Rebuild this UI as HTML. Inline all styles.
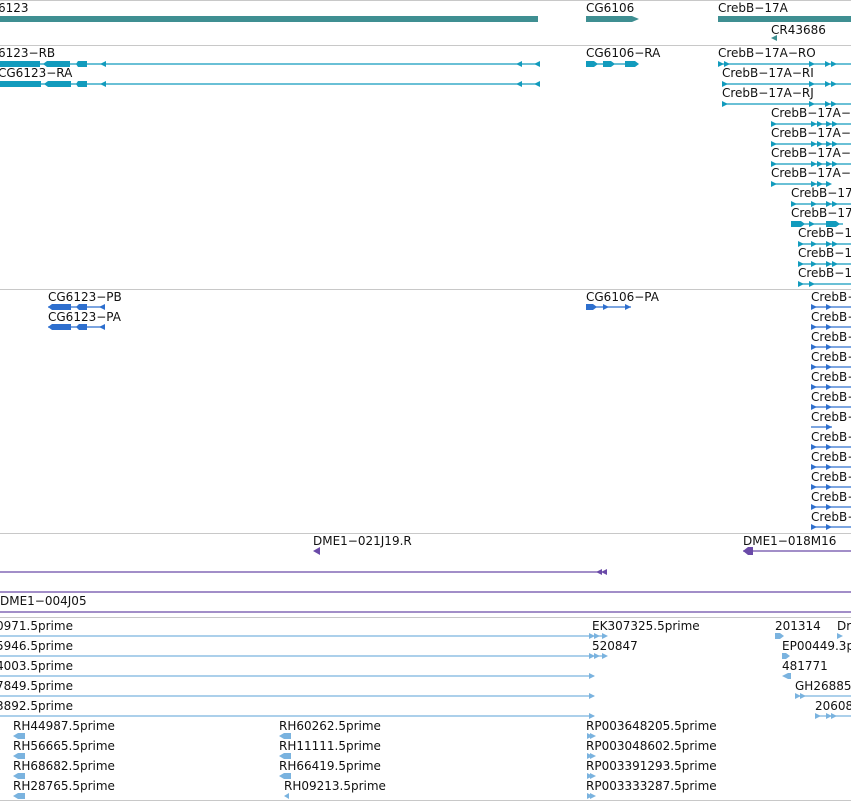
<!DOCTYPE html>
<html><head><meta charset="utf-8"><style>
html,body{margin:0;padding:0;background:#fff;width:851px;height:801px;overflow:hidden}
svg{display:block}
text{font-family:"DejaVu Sans","Liberation Sans",sans-serif;font-size:12px;fill:#111}
</style></head><body>
<svg width="851" height="801" viewBox="0 0 851 801">
<defs>
<path id="r" d="M0,-3L6,0L0,3Z"/>
<path id="l" d="M6,-3L0,0L6,3Z"/>
</defs>
<g stroke="#c8c8c8" stroke-width="1">
<line x1="0" y1="0.5" x2="851" y2="0.5"/><line x1="0" y1="45.5" x2="851" y2="45.5"/>
<line x1="0" y1="289.5" x2="851" y2="289.5"/><line x1="0" y1="533.5" x2="851" y2="533.5"/>
<line x1="0" y1="617.5" x2="851" y2="617.5"/><line x1="0" y1="800.5" x2="851" y2="800.5"/>
</g>
<!-- genes -->
<g fill="#3f8f92">
<rect x="0" y="16" width="538" height="6"/><rect x="586" y="16" width="46" height="6"/><path d="M632,16L639,19L632,22Z"/>
<rect x="718" y="16" width="133" height="6"/><path d="M771,38L777,35L777,41Z"/>
</g>
<text x="-2" y="12">6123</text><text x="586" y="12">CG6106</text><text x="718" y="12">CrebB−17A</text><text x="771" y="34">CR43686</text>
<!-- transcripts -->
<g fill="#129bbd" stroke="#129bbd">
<g stroke-width="1.2">
<line x1="0" y1="64" x2="540" y2="64"/><line x1="0" y1="84" x2="540" y2="84"/>
<line x1="586" y1="64" x2="637" y2="64"/>
<line x1="718" y1="64" x2="851" y2="64"/><line x1="722" y1="84" x2="851" y2="84"/><line x1="722" y1="104" x2="851" y2="104"/>
<line x1="771" y1="124" x2="851" y2="124"/><line x1="771" y1="144" x2="851" y2="144"/><line x1="771" y1="164" x2="851" y2="164"/><line x1="771" y1="184" x2="830" y2="184"/>
<line x1="791" y1="204" x2="851" y2="204"/><line x1="791" y1="224" x2="843" y2="224"/>
<line x1="798" y1="244" x2="851" y2="244"/><line x1="798" y1="264" x2="851" y2="264"/><line x1="798" y1="284" x2="851" y2="284"/>
</g>
<g stroke="none">
<rect x="0" y="61" width="40" height="6"/><path d="M47,61h23v6h-23l-4,-3Z"/><path d="M78,61h9v6h-9l-2,-3Z"/>
<rect x="0" y="81" width="41" height="6"/><path d="M48,81h23v6h-23l-4,-3Z"/><path d="M78,81h9v6h-9l-2,-3Z"/>
<use href="#l" x="100" y="64"/><use href="#l" x="516" y="64"/><use href="#l" x="534" y="64"/>
<use href="#l" x="100" y="84"/><use href="#l" x="516" y="84"/><use href="#l" x="534" y="84"/>
<path d="M586,61h8l4,3l-4,3h-8Z"/><path d="M603,61h8l4,3l-4,3h-8Z"/><path d="M625,61h10l4,3l-4,3h-10Z"/>
<use href="#r" x="718" y="64"/><use href="#r" x="724" y="64"/><use href="#r" x="809" y="64"/><use href="#r" x="825" y="64"/><use href="#r" x="831" y="64"/>
<use href="#r" x="722" y="84"/><use href="#r" x="809" y="84"/><use href="#r" x="825" y="84"/><use href="#r" x="831" y="84"/>
<use href="#r" x="722" y="104"/><use href="#r" x="809" y="104"/><use href="#r" x="825" y="104"/><use href="#r" x="831" y="104"/>
<use href="#r" x="771" y="124"/><use href="#r" x="811" y="124"/><use href="#r" x="817" y="124"/><use href="#r" x="826" y="124"/><use href="#r" x="832" y="124"/>
<use href="#r" x="771" y="144"/><use href="#r" x="811" y="144"/><use href="#r" x="817" y="144"/><use href="#r" x="826" y="144"/><use href="#r" x="832" y="144"/>
<use href="#r" x="771" y="164"/><use href="#r" x="811" y="164"/><use href="#r" x="817" y="164"/><use href="#r" x="826" y="164"/><use href="#r" x="832" y="164"/>
<use href="#r" x="771" y="184"/><use href="#r" x="811" y="184"/><use href="#r" x="817" y="184"/><use href="#r" x="826" y="184"/>
<use href="#r" x="791" y="204"/><use href="#r" x="811" y="204"/><use href="#r" x="826" y="204"/><use href="#r" x="832" y="204"/>
<path d="M791,221h10l4,3l-4,3h-10Z"/><use href="#r" x="809" y="224"/><path d="M826,221h10l4,3l-4,3h-10Z"/>
<use href="#r" x="798" y="244"/><use href="#r" x="811" y="244"/><use href="#r" x="826" y="244"/><use href="#r" x="832" y="244"/>
<use href="#r" x="798" y="264"/><use href="#r" x="811" y="264"/><use href="#r" x="826" y="264"/><use href="#r" x="832" y="264"/>
<use href="#r" x="798" y="284"/><use href="#r" x="809" y="284"/>
</g></g>
<text x="-2" y="57">6123−RB</text><text x="-2" y="77">CG6123−RA</text><text x="586" y="57">CG6106−RA</text>
<text x="718" y="57">CrebB−17A−RO</text><text x="722" y="77">CrebB−17A−RI</text><text x="722" y="97">CrebB−17A−RJ</text>
<text x="771" y="117">CrebB−17A−R</text><text x="771" y="137">CrebB−17A−R</text><text x="771" y="157">CrebB−17A−R</text><text x="771" y="177">CrebB−17A−R</text>
<text x="791" y="197">CrebB−17A</text><text x="791" y="217">CrebB−17A</text>
<text x="798" y="237">CrebB−17</text><text x="798" y="257">CrebB−17</text><text x="798" y="277">CrebB−17</text>
<!-- proteins -->
<g fill="#2e6fce" stroke="#2e6fce" stroke-width="1.2">
<line x1="48" y1="307" x2="105" y2="307"/><line x1="48" y1="327" x2="105" y2="327"/><line x1="586" y1="307" x2="631" y2="307"/>
<g stroke="none">
<path d="M52,304h19v6h-19l-4,-3Z"/><path d="M79,304h8v6h-8l-3,-3Z"/><use href="#l" x="99" y="307"/>
<path d="M52,324h19v6h-19l-4,-3Z"/><path d="M79,324h8v6h-8l-3,-3Z"/><use href="#l" x="99" y="327"/>
<path d="M586,304h7l4,3l-4,3h-7Z"/><use href="#r" x="603" y="307"/><use href="#r" x="625" y="307"/>
</g>
<g stroke-width="1.2">
<line x1="811" y1="307" x2="851" y2="307"/><line x1="811" y1="327" x2="851" y2="327"/><line x1="811" y1="347" x2="851" y2="347"/><line x1="811" y1="367" x2="851" y2="367"/><line x1="811" y1="387" x2="851" y2="387"/><line x1="811" y1="407" x2="851" y2="407"/><line x1="811" y1="427" x2="832" y2="427"/><line x1="811" y1="447" x2="851" y2="447"/><line x1="811" y1="467" x2="851" y2="467"/><line x1="811" y1="487" x2="851" y2="487"/><line x1="811" y1="507" x2="851" y2="507"/><line x1="811" y1="527" x2="851" y2="527"/>
</g>
<g stroke="none">
<use href="#r" x="811" y="307"/><use href="#r" x="826" y="307"/><use href="#r" x="811" y="327"/><use href="#r" x="826" y="327"/><use href="#r" x="811" y="347"/><use href="#r" x="826" y="347"/><use href="#r" x="811" y="367"/><use href="#r" x="826" y="367"/><use href="#r" x="811" y="387"/><use href="#r" x="826" y="387"/><use href="#r" x="811" y="407"/><use href="#r" x="826" y="407"/><use href="#r" x="826" y="427"/><use href="#r" x="811" y="447"/><use href="#r" x="826" y="447"/><use href="#r" x="811" y="467"/><use href="#r" x="826" y="467"/><use href="#r" x="811" y="487"/><use href="#r" x="826" y="487"/><use href="#r" x="811" y="507"/><use href="#r" x="826" y="507"/><use href="#r" x="811" y="527"/><use href="#r" x="826" y="527"/>
</g></g>
<text x="48" y="301">CG6123−PB</text><text x="48" y="321">CG6123−PA</text><text x="586" y="301">CG6106−PA</text>
<text x="811" y="301">CrebB−</text><text x="811" y="321">CrebB−</text><text x="811" y="341">CrebB−</text><text x="811" y="361">CrebB−</text><text x="811" y="381">CrebB−</text><text x="811" y="401">CrebB−</text><text x="811" y="421">CrebB−</text><text x="811" y="441">CrebB−</text><text x="811" y="461">CrebB−</text><text x="811" y="481">CrebB−</text><text x="811" y="501">CrebB−</text><text x="811" y="521">CrebB−</text>
<!-- clones -->
<g fill="#6a4aa8" stroke="#6a4aa8" stroke-width="1.2">
<line x1="743" y1="551" x2="851" y2="551"/><line x1="0" y1="572" x2="600" y2="572"/><line x1="0" y1="592" x2="851" y2="592"/><line x1="0" y1="612" x2="851" y2="612"/>
<g stroke="none"><path d="M313,551l7,-4v8Z"/><path d="M743,551l5,-4h5v8h-5Z"/><use href="#l" x="596" y="572"/><use href="#l" x="601" y="572"/></g>
</g>
<text x="313" y="545">DME1−021J19.R</text><text x="743" y="545">DME1−018M16</text><text x="0" y="605">DME1−004J05</text>
<!-- ESTs -->
<g fill="#7ab3df" stroke="#7ab3df" stroke-width="1.2">
<line x1="0" y1="636" x2="606" y2="636"/><line x1="0" y1="656" x2="606" y2="656"/><line x1="0" y1="676" x2="594" y2="676"/><line x1="0" y1="696" x2="594" y2="696"/><line x1="0" y1="716" x2="594" y2="716"/>
<line x1="795" y1="696" x2="851" y2="696"/><line x1="815" y1="716" x2="851" y2="716"/>
<g stroke="none">
<use href="#r" x="589" y="636"/><use href="#r" x="594" y="636"/><use href="#r" x="602" y="636"/>
<use href="#r" x="589" y="656"/><use href="#r" x="594" y="656"/><use href="#r" x="602" y="656"/>
<use href="#r" x="589" y="676"/><use href="#r" x="589" y="696"/><use href="#r" x="589" y="716"/>
<path d="M775,633h5l4,3l-4,3h-5Z"/><use href="#r" x="837" y="636"/><path d="M782,653h4l4,3l-4,3h-4Z"/><path d="M782,676l6,-3h3v6h-3Z"/>
<use href="#r" x="795" y="696"/><use href="#r" x="800" y="696"/><use href="#r" x="815" y="716"/><use href="#r" x="826" y="716"/><use href="#r" x="831" y="716"/>
<path d="M13,736l5,-3h7v6h-7Z"/><path d="M13,756l5,-3h7v6h-7Z"/><path d="M13,776l5,-3h7v6h-7Z"/><path d="M13,796l5,-3h7v6h-7Z"/>
<path d="M279,736l5,-3h7v6h-7Z"/><path d="M279,756l5,-3h7v6h-7Z"/><path d="M279,776l5,-3h7v6h-7Z"/><path d="M284,796l5,-3v6Z"/>
<use href="#r" x="587" y="736"/><use href="#r" x="590" y="736"/><use href="#r" x="587" y="756"/><use href="#r" x="590" y="756"/><use href="#r" x="587" y="776"/><use href="#r" x="590" y="776"/><use href="#r" x="587" y="796"/><use href="#r" x="590" y="796"/>
</g></g>
<text x="-4" y="630">0971.5prime</text><text x="-4" y="650">5946.5prime</text><text x="-4" y="670">4003.5prime</text><text x="-4" y="690">7849.5prime</text><text x="-4" y="710">3892.5prime</text>
<text x="592" y="630">EK307325.5prime</text><text x="592" y="650">520847</text>
<text x="775" y="630">201314</text><text x="837" y="630">Dr</text><text x="782" y="650">EP00449.3p</text><text x="782" y="670">481771</text><text x="795" y="690">GH26885</text><text x="815" y="710">20608</text>
<text x="13" y="730">RH44987.5prime</text><text x="13" y="750">RH56665.5prime</text><text x="13" y="770">RH68682.5prime</text><text x="13" y="790">RH28765.5prime</text>
<text x="279" y="730">RH60262.5prime</text><text x="279" y="750">RH11111.5prime</text><text x="279" y="770">RH66419.5prime</text><text x="284" y="790">RH09213.5prime</text>
<text x="586" y="730">RP003648205.5prime</text><text x="586" y="750">RP003048602.5prime</text><text x="586" y="770">RP003391293.5prime</text><text x="586" y="790">RP003333287.5prime</text>
</svg>
</body></html>
